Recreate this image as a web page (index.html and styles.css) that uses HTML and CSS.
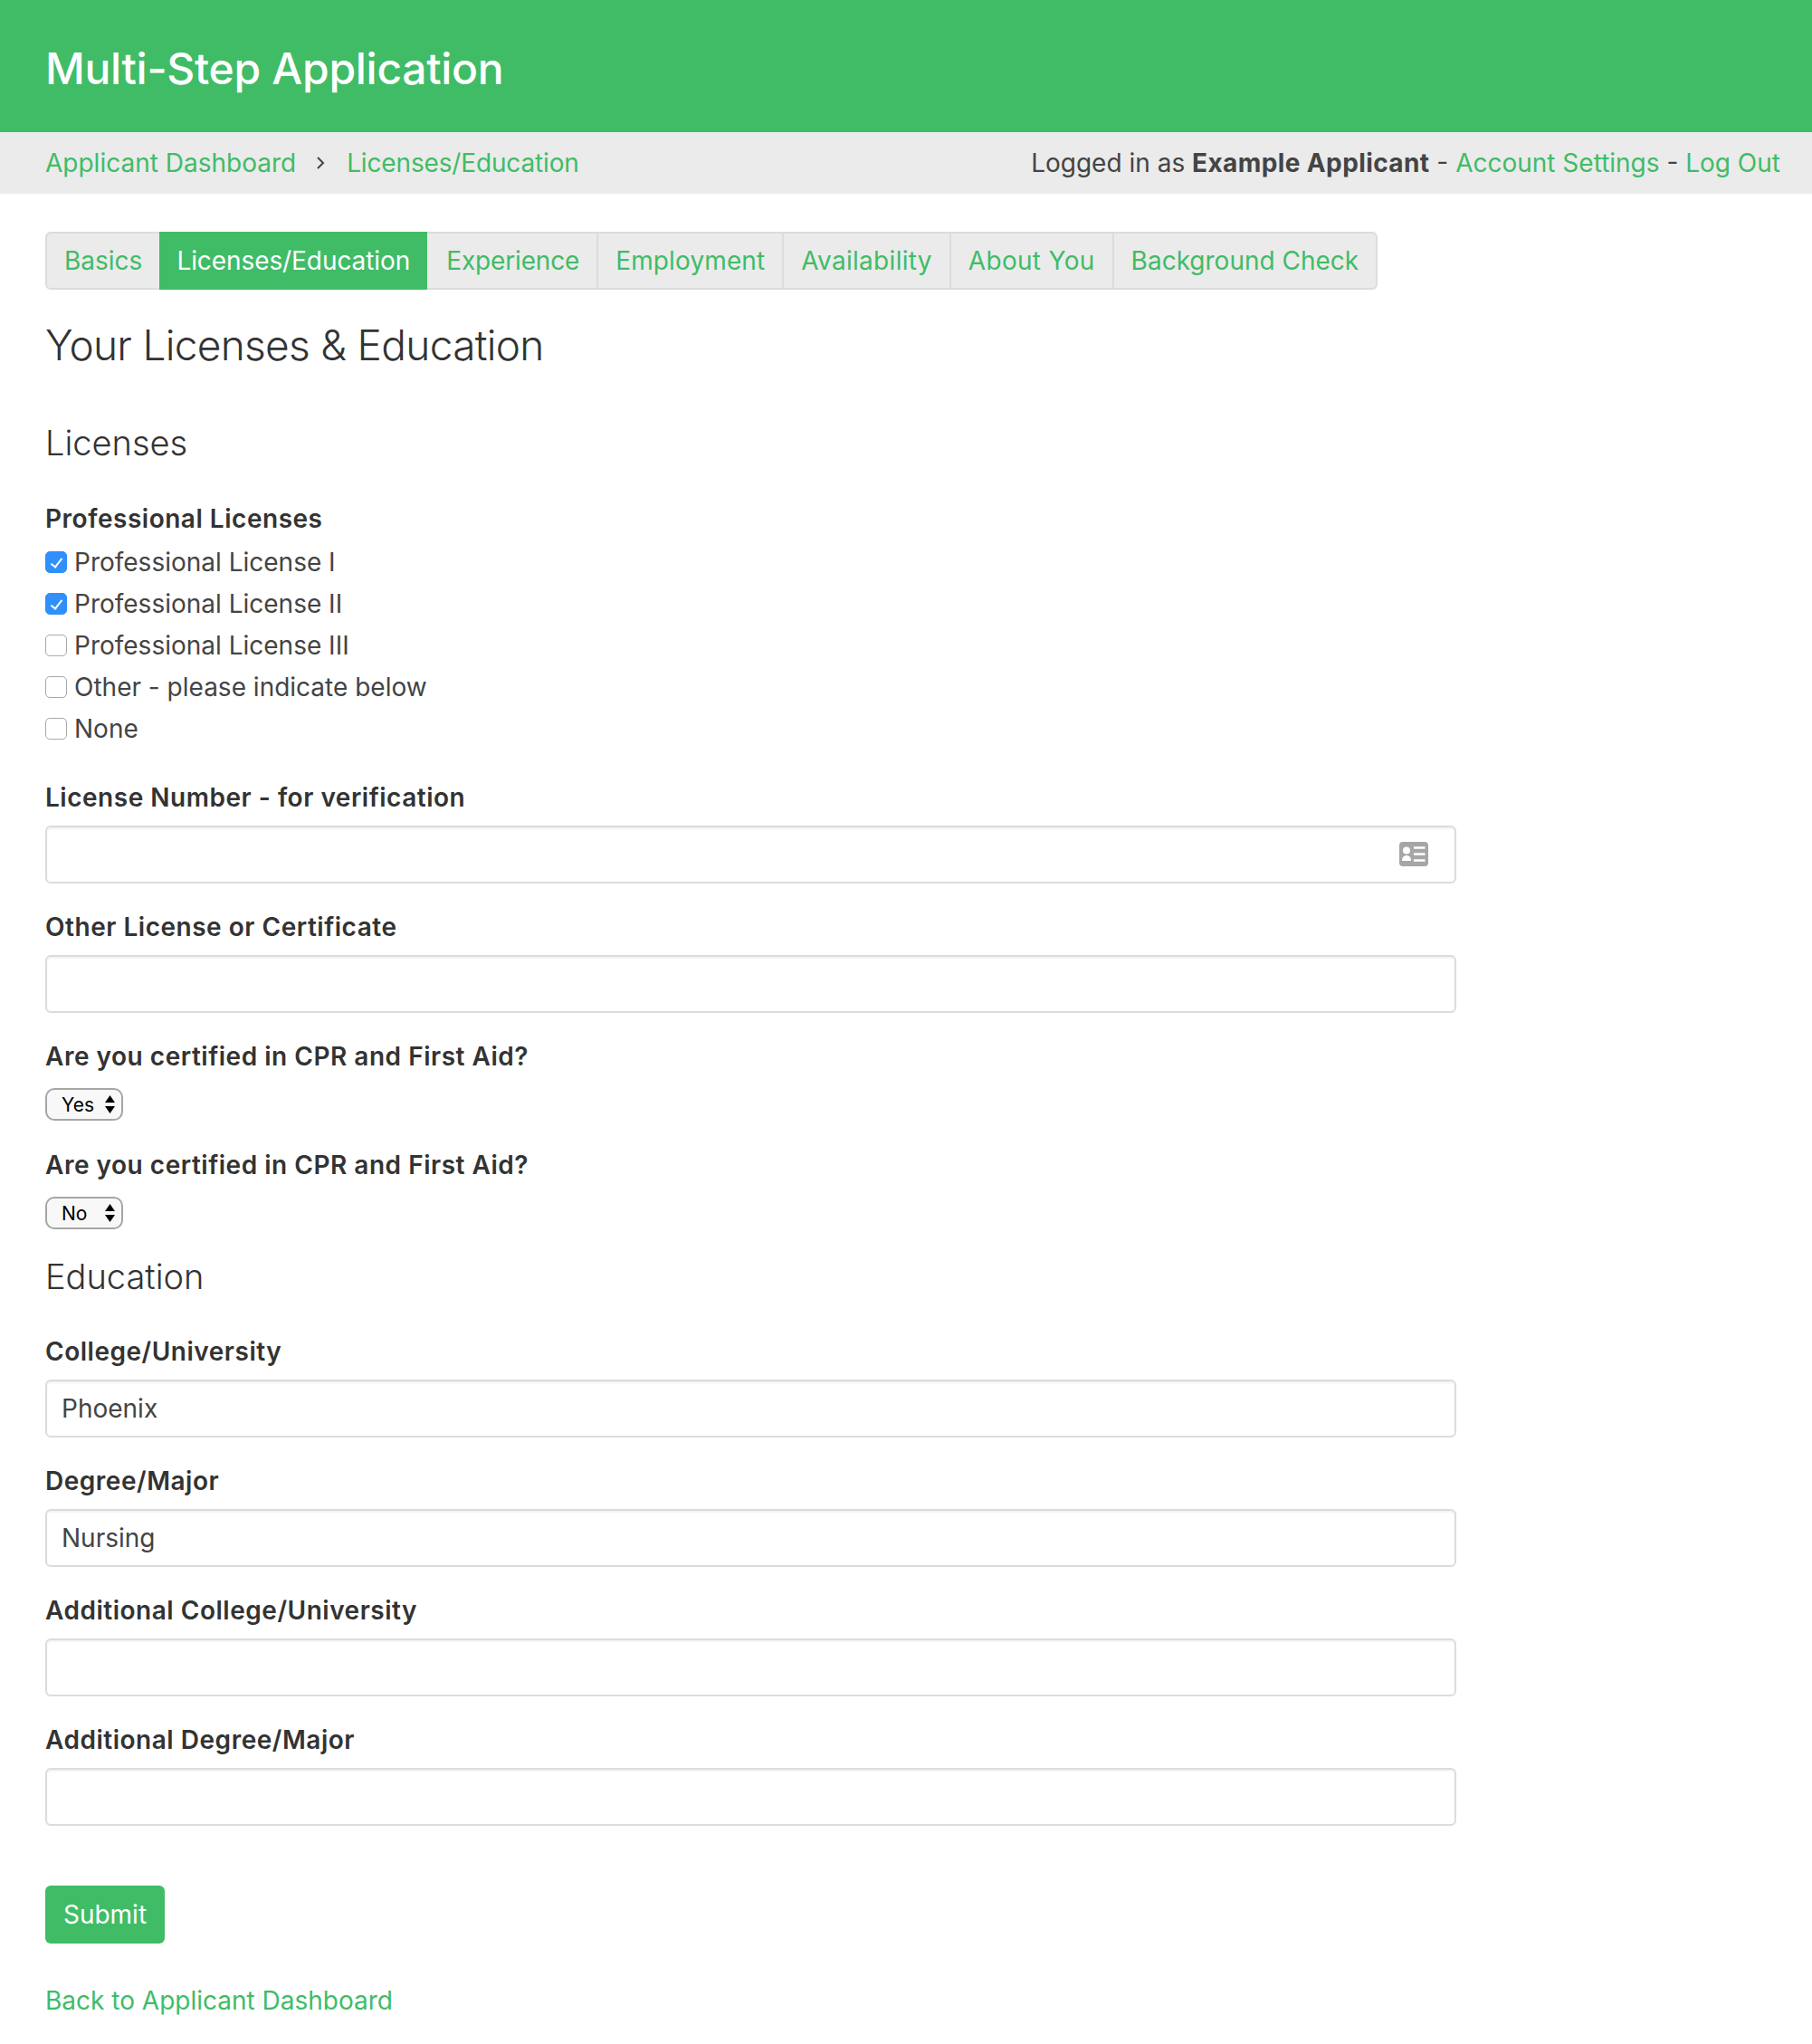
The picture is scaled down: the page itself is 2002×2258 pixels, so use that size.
FILE: index.html
```html
<!DOCTYPE html>
<html lang="en">

<head>
    <meta charset="UTF-8">
    <meta name="viewport" content="width=device-width, initial-scale=1.0">
    <title>Multi-Step Application</title>
    <link rel="stylesheet" href="styles.css">
</head>

<body>
    <div class="header">
        <h1 class="site-title">Multi-Step Application</h1>
    </div>

    <div class="subbar">
        <div class="breadcrumb">
            <a href="#">Applicant Dashboard</a>
            <svg class="crumb-arrow" viewBox="0 0 10 16" width="10" height="16">
                <path d="M2 2l6 6-6 6" fill="none" stroke="#444" stroke-width="2"></path>
            </svg>
            <a class="crumb-current" href="#">Licenses/Education</a>
        </div>
        <div class="account">
            Logged in as <strong>Example Applicant</strong> - <a href="#">Account Settings</a> - <a href="#">Log Out</a>
        </div>
    </div>

    <div class="container">
        <ul class="tabs">
            <li><a href="#">Basics</a></li>
            <li class="active"><a href="#">Licenses/Education</a></li>
            <li><a href="#">Experience</a></li>
            <li><a href="#">Employment</a></li>
            <li><a href="#">Availability</a></li>
            <li><a href="#">About You</a></li>
            <li><a href="#">Background Check</a></li>
        </ul>

        <h2 class="page-title">Your Licenses &amp; Education</h2>

        <form class="app-form">
            <h3 class="section-title">Licenses</h3>

            <div class="checks">
                <div class="field-label">Professional Licenses</div>
                <label class="check"><input type="checkbox" checked> Professional License I</label>
                <label class="check"><input type="checkbox" checked> Professional License II</label>
                <label class="check"><input type="checkbox"> Professional License III</label>
                <label class="check"><input type="checkbox"> Other - please indicate below</label>
                <label class="check"><input type="checkbox"> None</label>
            </div>

            <div class="field">
                <label class="field-label">License Number - for verification</label>
                <div class="input-wrap">
                    <input type="text" class="text-input">
                    <svg class="input-icon" viewBox="0 0 32 27" width="32" height="27">
                        <rect width="32" height="27" rx="4" fill="#a6a6a6"></rect>
                        <circle cx="8" cy="9.500" r="4" fill="#fff"></circle>
                        <path d="M3 21c0-4 2-6 5-6s5 2 5 6z" fill="#fff"></path>
                        <path d="M16 6.500h12.500M16 13.500h12.500M16 20.500h12.500" stroke="#fff" stroke-width="2.500"></path>
                    </svg>
                </div>
            </div>

            <div class="field">
                <label class="field-label">Other License or Certificate</label>
                <input type="text" class="text-input">
            </div>

            <div class="field-select">
                <label class="field-label">Are you certified in CPR and First Aid?</label>
                <div class="select-wrap">
                    <select class="select-input"><option>Yes</option><option>No</option></select>
                    <svg class="select-arrows" viewBox="0 0 11 20" width="11" height="20">
                        <path d="M5.500 0l5.500 8H0zM5.500 20L0 12h11z" fill="#000"></path>
                    </svg>
                </div>
            </div>

            <div class="field-select">
                <label class="field-label">Are you certified in CPR and First Aid?</label>
                <div class="select-wrap">
                    <select class="select-input"><option>No</option><option>Yes</option></select>
                    <svg class="select-arrows" viewBox="0 0 11 20" width="11" height="20">
                        <path d="M5.500 0l5.500 8H0zM5.500 20L0 12h11z" fill="#000"></path>
                    </svg>
                </div>
            </div>

            <h3 class="section-title education">Education</h3>

            <div class="field">
                <label class="field-label">College/University</label>
                <input type="text" class="text-input" value="Phoenix">
            </div>

            <div class="field">
                <label class="field-label">Degree/Major</label>
                <input type="text" class="text-input" value="Nursing">
            </div>

            <div class="field">
                <label class="field-label">Additional College/University</label>
                <input type="text" class="text-input">
            </div>

            <div class="field">
                <label class="field-label">Additional Degree/Major</label>
                <input type="text" class="text-input">
            </div>

            <button type="button" class="button">Submit</button>
        </form>

        <a class="back-link" href="#">Back to Applicant Dashboard</a>
    </div>
</body>

</html>
```
FILE: styles.css
```css
/* General Page Styles */
body {
    font-family: 'Inter', 'Liberation Sans', sans-serif;
    font-size: 28px;
    line-height: 46px;
    color: #444;
    background-color: #fff;
    margin: 0;
    padding: 0;
}

a {
    color: #40bc67;
    text-decoration: none;
}

/* Header */
.header {
    background-color: #40bc67;
    height: 146px;
    padding: 6px 50px 0;
    display: flex;
    align-items: center;
    box-sizing: border-box;
}

.site-title {
    font-size: 48px;
    font-weight: 450;
    letter-spacing: -0.3px;
    color: #fff;
    margin: 0;
}

.subbar {
    background-color: #ebebeb;
    height: 68px;
    padding: 0 35px 0 50px;
    display: flex;
    align-items: center;
    justify-content: space-between;
}

.breadcrumb {
    display: flex;
    align-items: center;
}

.crumb-arrow {
    margin: 0 24px 0 22px;
}

.crumb-current {
    letter-spacing: -0.15px;
}

.account strong {
    letter-spacing: 0.4px;
}

/* Layout */
.container {
    width: 1559px;
    padding: 42px 0 24px 50px;
}

/* Tabs */
.tabs {
    display: inline-flex;
    list-style: none;
    height: 64px;
    margin: 0;
    padding: 0;
    background-color: #ebebeb;
    border: 2px solid #dcdcdc;
    border-radius: 6px;
    box-sizing: border-box;
}

.tabs li {
    border-left: 2px solid #dcdcdc;
    padding: 0 19px;
    line-height: 60px;
}

.tabs li:first-child {
    border-left: none;
}

.tabs li.active {
    background-color: #40bc67;
    margin: -2px 0;
    line-height: 64px;
    border-left: none;
    letter-spacing: -0.08px;
}

.tabs li.active + li {
    border-left: none;
    padding-left: 21px;
    letter-spacing: -0.15px;
}

.tabs li.active a {
    color: #fff;
}

.tabs li:nth-child(4) {
    letter-spacing: 0.12px;
}

.tabs li:nth-child(5),
.tabs li:nth-child(6) {
    letter-spacing: 0.3px;
}

/* Headings */
.page-title {
    font-size: 46px;
    font-weight: 300;
    line-height: 60px;
    letter-spacing: -0.7px;
    color: #333;
    margin: 31px 0 0;
}

.section-title {
    font-size: 38px;
    font-weight: 300;
    line-height: 50px;
    color: #333;
    margin: 53px 0 0;
}

.section-title.education {
    margin: 27px 0 35px;
}

/* Form fields */
.field-label {
    display: block;
    font-weight: 600;
    letter-spacing: 0.52px;
    color: #333;
}

.checks {
    margin-top: 36px;
    margin-bottom: 30px;
}

.checks .field-label {
    margin-bottom: 2px;
}

.check {
    display: flex;
    align-items: center;
}

.check input {
    appearance: none;
    width: 24px;
    height: 24px;
    margin: 0 8px 0 0;
    border: 1px solid #a8a8a8;
    border-radius: 5px;
    background-color: #fff;
    display: flex;
    align-items: center;
    justify-content: center;
    box-sizing: border-box;
}

.check input:checked {
    background-color: #2f8ffb;
    border-color: #2f8ffb;
}

.check input:checked::after {
    content: "";
    width: 5px;
    height: 11px;
    margin-top: -2px;
    border: solid #fff;
    border-width: 0 2.500px 2.500px 0;
    transform: rotate(38deg);
}

.field {
    margin-bottom: 25px;
}

.field .field-label {
    margin-bottom: 8px;
}

.input-wrap {
    position: relative;
}

.text-input {
    display: block;
    width: 100%;
    height: 64px;
    padding: 0 16px;
    font-family: inherit;
    font-size: 28px;
    color: #444;
    background-color: #fff;
    border: 2px solid #dcdcdc;
    border-radius: 6px;
    box-shadow: inset 0 2px 2px rgba(0, 0, 0, 0.05);
    box-sizing: border-box;
}

.input-icon {
    position: absolute;
    right: 31px;
    top: 18px;
}

.field-select {
    margin-bottom: 26px;
}

.select-wrap {
    position: relative;
    width: 86px;
    height: 36px;
    margin-top: 12px;
}

.select-input {
    appearance: none;
    display: block;
    width: 86px;
    height: 36px;
    padding: 0 0 0 16px;
    font-family: inherit;
    font-size: 21px;
    color: #000;
    background-color: #f8f8f8;
    border: 2px solid #a6a6a6;
    border-radius: 10px;
    box-sizing: border-box;
}

.select-arrows {
    position: absolute;
    right: 9px;
    top: 8px;
}

/* Submit */
.button {
    display: block;
    width: 132px;
    height: 64px;
    margin-top: 66px;
    padding: 0;
    font-family: inherit;
    font-size: 28px;
    color: #fff;
    background-color: #40bc67;
    border: none;
    border-radius: 6px;
}

.back-link {
    display: block;
    margin-top: 40px;
}
```
